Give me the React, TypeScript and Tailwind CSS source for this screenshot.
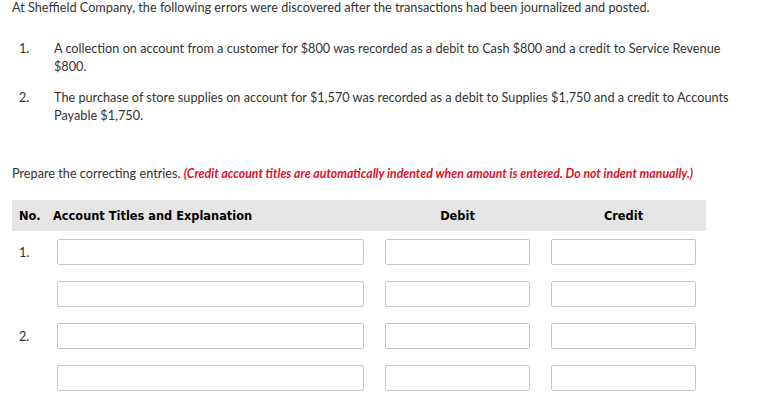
import React from "react";

const lato = { fontFamily: "Lato, 'Open Sans', sans-serif" };

function Field({ w }: { w: string }) {
  return (
    <div className={`${w} h-[26px] border border-[#c8c8c8] rounded-[2px] bg-white`} />
  );
}

function Row({ n }: { n?: string }) {
  return (
    <div className="flex items-center h-[26px]">
      <div className="w-[45px] pl-[7px] text-[12.7px] text-[#333]">{n}</div>
      <Field w="w-[307px]" />
      <div className="w-[21px]" />
      <Field w="w-[145px]" />
      <div className="w-[21px]" />
      <Field w="w-[145px]" />
    </div>
  );
}

export default function App() {
  return (
    <div className="w-[762px] h-[416px] bg-white text-[#333] text-[12.7px] leading-[18px] overflow-hidden" style={lato}>
      <div className="pl-[12px] -mt-[2px]">
        At Sheffield Company, the following errors were discovered after the transactions had been journalized and posted.
      </div>
      <div className="mt-[23px] flex pl-[19px]">
        <div className="w-[35px] shrink-0">1.</div>
        <div className="w-[676px]">
          A collection on account from a customer for $800 was recorded as a debit to Cash $800 and a credit to Service Revenue $800.
        </div>
      </div>
      <div className="mt-[13px] flex pl-[19px]">
        <div className="w-[35px] shrink-0">2.</div>
        <div className="w-[680px]">
          The purchase of store supplies on account for $1,570 was recorded as a debit to Supplies $1,750 and a credit to Accounts Payable $1,750.
        </div>
      </div>
      <div className="mt-[40px] pl-[12px]">
        Prepare the correcting entries.{" "}
        <span className="text-[#e0102a] italic font-bold text-[12.3px]">
          (Credit account titles are automatically indented when amount is entered. Do not indent manually.)
        </span>
      </div>
      <div className="ml-[12px] mt-[17px] w-[694px]">
        <div
          className="h-[31px] bg-[#e5e5e5] flex items-center text-[11.4px] font-bold text-black"
          style={{ fontFamily: "'DejaVu Sans', Verdana, sans-serif" }}
        >
          <div className="w-[41px] pl-[7px]">No.</div>
          <div className="w-[332px]">Account Titles and Explanation</div>
          <div className="w-[145px] text-center">Debit</div>
          <div className="w-[21px]" />
          <div className="w-[145px] text-center">Credit</div>
        </div>
        <div className="pt-[8px] flex flex-col gap-[16px]">
          <Row n="1." />
          <Row />
          <Row n="2." />
          <Row />
        </div>
      </div>
    </div>
  );
}
